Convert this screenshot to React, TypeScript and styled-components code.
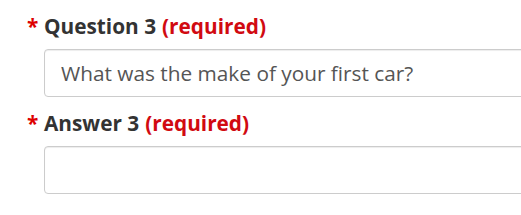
import React from "react";
import styled, { createGlobalStyle } from "styled-components";

const Global = createGlobalStyle`
  html, body { margin: 0; padding: 0; background: #fff; overflow: hidden; }
  body { font-family: "Open Sans", "Noto Sans", sans-serif; }
`;

const Form = styled.div`
  width: 560px;
  padding: 11px 0 0 27px;
  display: flex;
  flex-direction: column;
`;

const Group = styled.div`
  display: flex;
  flex-direction: column;
  margin-bottom: 11px;
`;

const Label = styled.label`
  display: flex;
  align-items: baseline;
  font-size: 20.8px;
  font-weight: 700;
  color: #333;
  line-height: 30px;
  margin-bottom: 8px;
`;

const Star = styled.span`
  color: #d00;
  width: 17px;
  flex: none;
`;

const Required = styled.span`
  color: #d10a11;
  margin-left: 6px;
`;

const Input = styled.input`
  margin-left: 17px;
  height: 48px;
  box-sizing: border-box;
  border: 1px solid #ccc;
  border-radius: 4px;
  padding: 0 16px;
  font-family: "Open Sans", "Noto Sans", sans-serif;
  font-size: 20.8px;
  color: #555;
  box-shadow: inset 0 1px 1px rgba(0, 0, 0, 0.075);
  outline: none;
`;

export default function App() {
  return (
    <>
      <Global />
      <Form>
        <Group>
          <Label>
            <Star>*</Star>Question 3<Required>(required)</Required>
          </Label>
          <Input defaultValue="What was the make of your first car?" />
        </Group>
        <Group>
          <Label>
            <Star>*</Star>Answer 3<Required>(required)</Required>
          </Label>
          <Input defaultValue="" />
        </Group>
      </Form>
    </>
  );
}
